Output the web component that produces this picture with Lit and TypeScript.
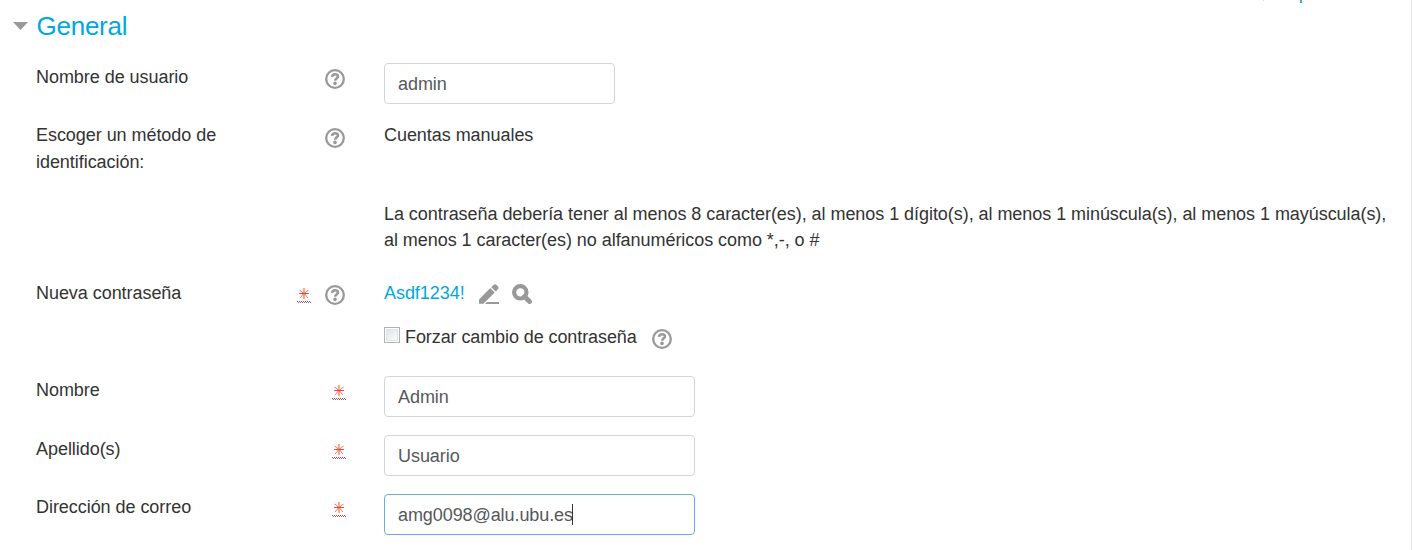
import { LitElement, html, css, nothing } from "lit";
import { customElement, property } from "lit/decorators.js";

@customElement("help-icon")
class HelpIcon extends LitElement {
  static styles = css`
    :host { display: block; width: 20px; height: 20px; }
    svg { display: block; }
  `;
  render() {
    return html`<svg width="20" height="20" viewBox="0 0 20 20" fill="none" stroke="#999">
      <circle cx="10" cy="10" r="8.8" stroke-width="2.3" />
      <path d="M7 7.9C7.2 6 8.4 5.2 10.1 5.2C11.9 5.2 13 6.1 13 7.4C13 9.3 10.2 9.3 10.2 11.7" stroke-width="2.6" />
      <circle cx="10" cy="14.4" r="1.8" fill="#999" stroke="none" />
    </svg>`;
  }
}

@customElement("required-mark")
class RequiredMark extends LitElement {
  static styles = css`
    :host { display: block; width: 14px; height: 16px; }
    svg { display: block; }
  `;
  render() {
    return html`<svg width="14" height="16" viewBox="0 0 14 16" fill="none">
      <path d="M2 6.5H12" stroke="#ff4a48" />
      <path d="M7 1V12" stroke="#ffa070" stroke-width="1.8" />
      <path d="M2.5 3.2L4.5 4.2L6.5 6.5L4.5 9.5L3 10.8M11.5 3.2L9.5 4.2L7.5 6.5L9.5 9.5L11 10.8" stroke="#ff6a68" />
      <path d="M5 6.5H9" stroke="#ff3030" />
      <path d="M0 14.5H14" stroke="#f03030" stroke-dasharray="1 1" />
      <path d="M1 15.5H14" stroke="#777" stroke-dasharray="1 1" />
    </svg>`;
  }
}

@customElement("form-row")
class FormRow extends LitElement {
  @property() label = "";
  @property({ type: Boolean }) required = false;
  @property({ type: Boolean }) help = false;

  static styles = css`
    :host {
      display: grid;
      grid-template-columns: 260px 50px 1fr;
      align-items: start;
    }
    .label { max-width: 200px; line-height: 27px; }
    .marks { display: flex; justify-content: flex-end; gap: 14px; padding: 5px 1px 0 0; }
    .marks required-mark { margin-top: 2px; }
    .marks.plain { padding: 5px 0 0; }
    .content { padding-left: 38px; }
    :host([boxed]) .label, :host([boxed]) .marks { margin-top: 1px; }
    :host(.method) .marks { margin-top: 1px; }
  `;
  render() {
    return html`
      <div class="label">${this.label}</div>
      <div class="marks ${this.help ? "" : "plain"}">
        ${this.required ? html`<required-mark></required-mark>` : nothing}
        ${this.help ? html`<help-icon></help-icon>` : nothing}
      </div>
      <div class="content"><slot></slot></div>
    `;
  }
}

@customElement("app-root")
class AppRoot extends LitElement {
  static styles = css`
    :host {
      display: block;
      box-sizing: border-box;
      height: 550px;
      overflow: hidden;
      position: relative;
      background: #fff;
      border-right: 1px solid #e8e8e8;
      font: 18px/26px "Liberation Sans", Arial, sans-serif;
      letter-spacing: -0.05px;
      color: #333;
    }
    .remnant { position: absolute; left: 1300px; top: 0; width: 2px; height: 3px; background: #38a9e4; }
    .speck { position: absolute; left: 1263px; top: 0; width: 1px; height: 1px; background: #ddd; }
    .heading { display: flex; align-items: center; height: 52px; padding-left: 12.5px; gap: 9px; }
    h3 { margin: 0; font-weight: 400; font-size: 26px; line-height: 32px; letter-spacing: -0.25px; color: #00a8de; }
    form { display: flex; flex-direction: column; padding: 11px 0 0 36px; }
    .name { height: 59px; }
    .method, .policy { height: 79px; }
    .password { height: 44px; }
    .force { height: 52px; letter-spacing: -0.09px; }
    .box { height: 59px; }
    .long { white-space: nowrap; }
    .line { display: flex; align-items: flex-start; white-space: nowrap; }
    .link { color: #00a8de; }
    .pencil { margin: 4px 0 0 13px; }
    .lens { margin: 4px 0 0 12px; }
    .check { box-sizing: border-box; width: 16px; height: 16px; border: 1px solid #b0b4b6; padding: 1px; margin: 3px 5px 0 0; }
    .check::before { content: ""; display: block; box-sizing: border-box; width: 12px; height: 12px; border: 1px solid #e3e4e6; background: linear-gradient(135deg, #e2e4e7, #fafafa); }
    .line help-icon { margin: 5px 0 0 15px; }
    .input {
      box-sizing: border-box;
      width: 311px;
      height: 41px;
      padding: 7px 13px;
      border: 1px solid #d4d5d6;
      border-radius: 4px;
      color: #55595c;
      display: flex;
      align-items: flex-start;
    }
    .short { width: 231px; }
    .focus { border-color: #66afe9; letter-spacing: -0.08px; }
    .caret { width: 1px; height: 21px; margin: 2px 0 0 -0.5px; background: #333; }
  `;

  render() {
    return html`
      <div class="remnant"></div>
      <div class="speck"></div>
      <div class="heading">
        <svg width="15" height="8" viewBox="0 0 15 8"><path d="M0 0H15L7.5 8Z" fill="#999" /></svg>
        <h3>General</h3>
      </div>
      <form>
        <form-row class="name" boxed label="Nombre de usuario" help>
          <div class="input short">admin</div>
        </form-row>
        <form-row class="method" label="Escoger un método de identificación:" help>Cuentas manuales</form-row>
        <form-row class="policy">
          <div class="long">La contraseña debería tener al menos 8 caracter(es), al menos 1 dígito(s), al menos 1 minúscula(s), al menos 1 mayúscula(s),</div>
          <div class="long">al menos 1 caracter(es) no alfanuméricos como *,-, o #</div>
        </form-row>
        <form-row class="password" label="Nueva contraseña" required help>
          <div class="line">
            <span class="link">Asdf1234!</span>
            <svg class="pencil" width="22" height="21" viewBox="0 0 22 21" fill="#999">
              <path d="M1 19.8V15.4L12.3 4.1L16.7 8.5L5.4 19.8Z" />
              <path d="M13.2 3.2L15.2 1.2Q17-.6 18.9 1.2L19.7 2Q21.4 3.8 19.7 5.6L17.7 7.6Z" />
              <path d="M9 18H21V20H7Z" />
            </svg>
            <svg class="lens" width="20" height="20" viewBox="0 0 20 20" fill="none" stroke="#999">
              <circle cx="8.3" cy="8.3" r="6.2" stroke-width="4.2" />
              <path d="M12.5 12.5L17.5 17.5" stroke-width="4.8" stroke-linecap="round" />
            </svg>
          </div>
        </form-row>
        <form-row class="force">
          <div class="line">
            <span class="check"></span><span>Forzar cambio de contraseña</span><help-icon></help-icon>
          </div>
        </form-row>
        <form-row class="box" boxed label="Nombre" required><div class="input">Admin</div></form-row>
        <form-row class="box" boxed label="Apellido(s)" required><div class="input">Usuario</div></form-row>
        <form-row class="box" label="Dirección de correo" required>
          <div class="input focus">amg0098@alu.ubu.es<span class="caret"></span></div>
        </form-row>
      </form>
    `;
  }
}
